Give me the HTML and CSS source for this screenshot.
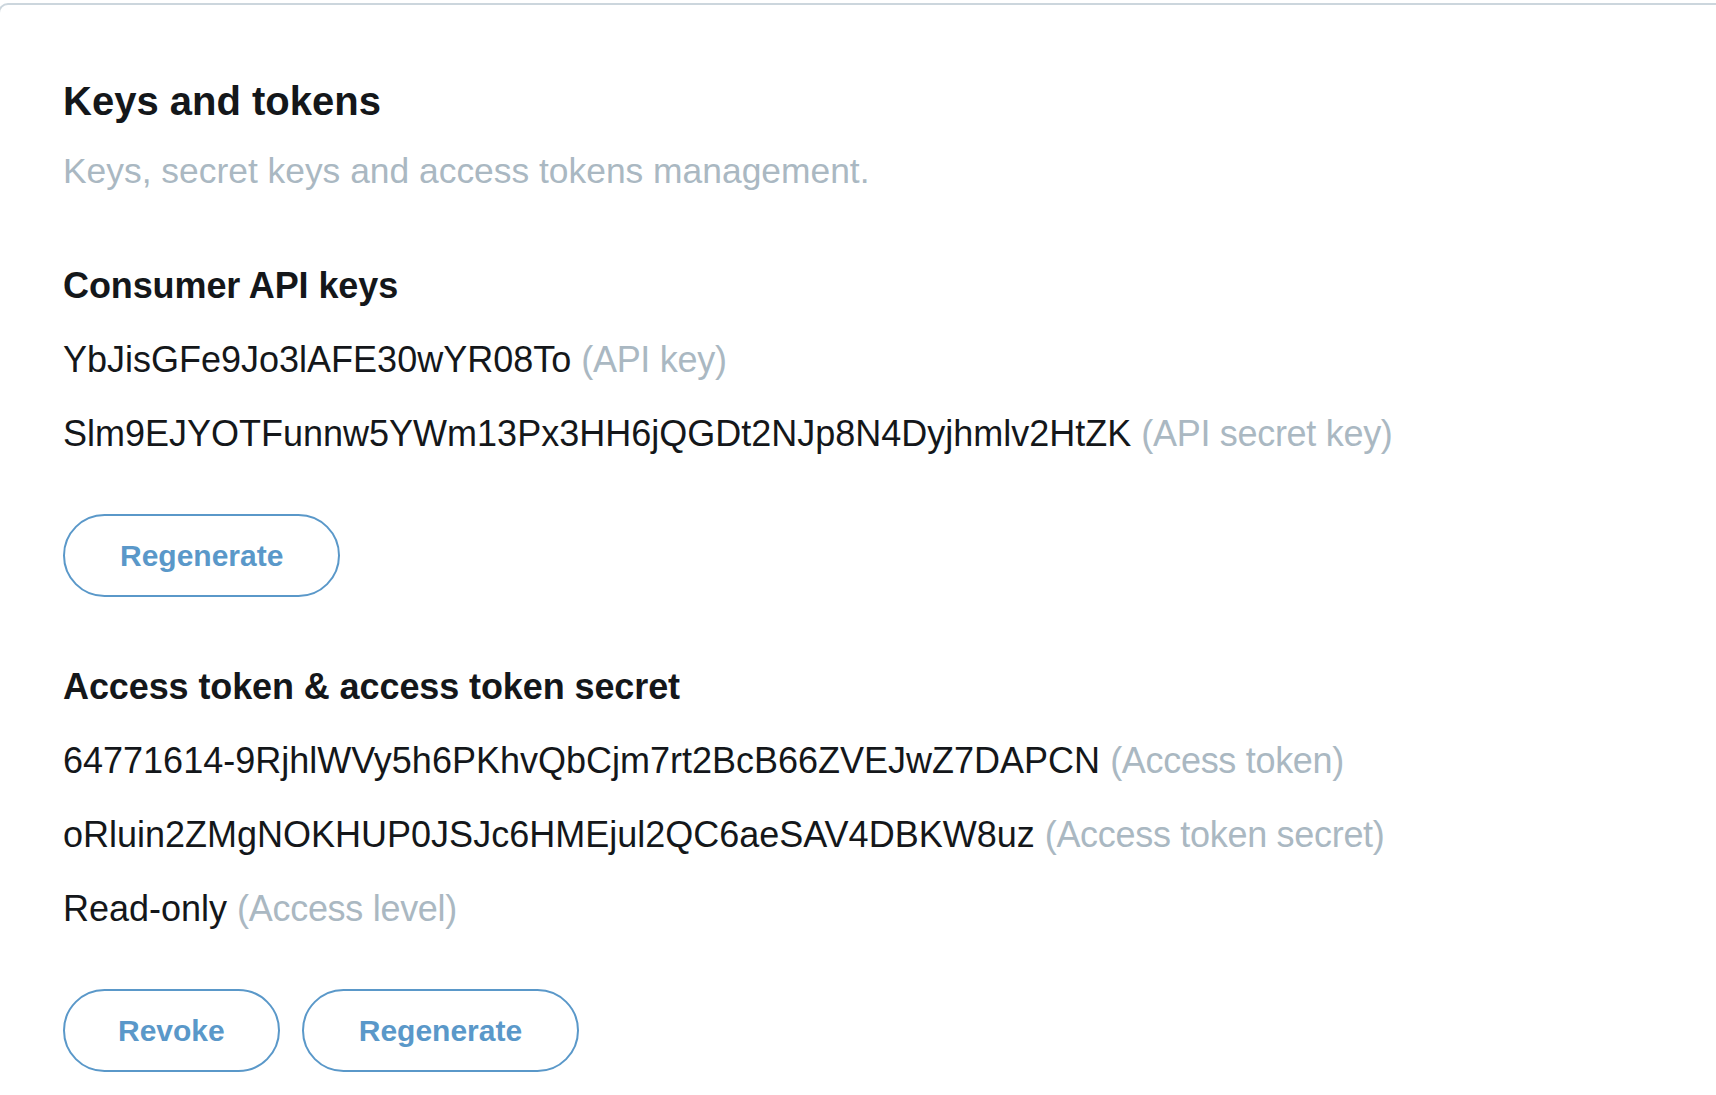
FILE: index.html
```html
<!DOCTYPE html>
<html lang="en">
<head>
<meta charset="utf-8">
<title>Keys and tokens</title>
<link rel="stylesheet" href="styles.css">
</head>
<body>
<main class="card">
  <h1 class="title">Keys and tokens</h1>
  <p class="subtitle">Keys, secret keys and access tokens management.</p>

  <section class="section">
    <h2 class="section-title">Consumer API keys</h2>
    <p class="row">YbJisGFe9Jo3lAFE30wYR08To <span class="label">(API key)</span></p>
    <p class="row">Slm9EJYOTFunnw5YWm13Px3HH6jQGDt2NJp8N4Dyjhmlv2HtZK <span class="label">(API secret key)</span></p>
    <div class="actions">
      <button class="btn" type="button">Regenerate</button>
    </div>
  </section>

  <section class="section section-second">
    <h2 class="section-title">Access token &amp; access token secret</h2>
    <p class="row">64771614-9RjhlWVy5h6PKhvQbCjm7rt2BcB66ZVEJwZ7DAPCN <span class="label">(Access token)</span></p>
    <p class="row">oRluin2ZMgNOKHUP0JSJc6HMEjul2QC6aeSAV4DBKW8uz <span class="label">(Access token secret)</span></p>
    <p class="row">Read-only <span class="label">(Access level)</span></p>
    <div class="actions">
      <button class="btn btn-revoke" type="button">Revoke</button>
      <button class="btn" type="button">Regenerate</button>
    </div>
  </section>
</main>
</body>
</html>
```

FILE: styles.css
```css
html, body {
  margin: 0;
  padding: 0;
  overflow: hidden;
  background: #ffffff;
}

body {
  font-family: "Liberation Sans", Arial, sans-serif;
  color: #14171a;
}

.card {
  margin: 3px 0 0 -2px;
  width: 1780px;
  box-sizing: border-box;
  border: 2px solid #ccd6dd;
  border-radius: 10px;
  padding: 72px 0 200px 63px;
  background: #ffffff;
}

.title {
  margin: 0;
  font-size: 40px;
  line-height: 48px;
  font-weight: 700;
}

.subtitle {
  margin: 25px 0 0;
  font-size: 35.4px;
  line-height: 42px;
  color: #aab8c2;
}

.section {
  margin-top: 72px;
  display: flex;
  flex-direction: column;
  gap: 30px;
}

.section-second {
  margin-top: 68px;
}

.section-title {
  margin: 0;
  font-size: 36px;
  line-height: 44px;
  font-weight: 700;
  letter-spacing: -0.1px;
}

.row {
  margin: 0;
  font-size: 36px;
  line-height: 44px;
  white-space: nowrap;
}

.label {
  color: #aab8c2;
  letter-spacing: -0.3px;
}

.actions {
  margin-top: 28px;
  display: flex;
  gap: 22px;
}

.btn {
  height: 83px;
  box-sizing: border-box;
  padding: 0 55px;
  border: 2px solid #5a98c9;
  border-radius: 42px;
  background: #ffffff;
  color: #5a98c9;
  font-family: "Liberation Sans", Arial, sans-serif;
  font-size: 30px;
  font-weight: 700;
}

.btn-revoke {
  padding: 0 53px;
}
```
